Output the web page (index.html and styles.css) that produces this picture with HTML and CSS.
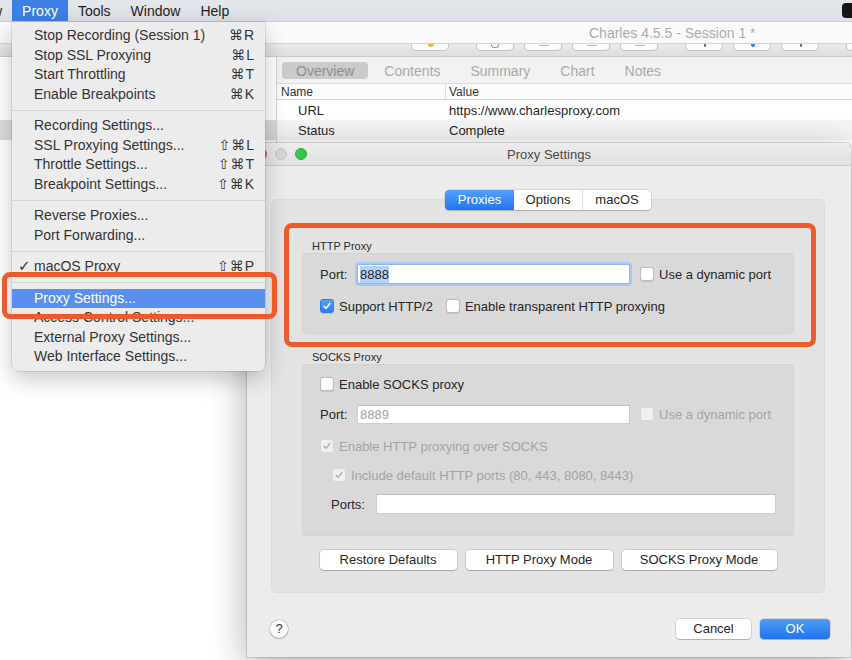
FILE: index.html
```html
<!DOCTYPE html>
<html lang="en">
<head>
  <meta charset="UTF-8">
  <title>Charles - Proxy Settings</title>
  <link rel="stylesheet" href="styles.css">
</head>
<body>
  <div class="menubar">
    <span class="mb-item mb-cut">View</span>
    <span class="mb-item mb-active">Proxy</span>
    <span class="mb-item">Tools</span>
    <span class="mb-item">Window</span>
    <span class="mb-item">Help</span>
    <span class="mb-status"></span>
  </div>

  <div class="main-window">
    <div class="titlebar">Charles 4.5.5 - Session 1 *</div>
    <div class="toolbar">
      <span class="tb-btn tb-first"><i class="tb-mark mark-yellow"></i></span>
      <span class="tb-btn tb-group"><i class="tb-mark mark-ring"></i></span>
      <span class="tb-btn"><i class="tb-mark mark-bar"></i></span>
      <span class="tb-btn"><i class="tb-mark mark-bar"></i></span>
      <span class="tb-btn"><i class="tb-mark mark-bar"></i></span>
      <span class="tb-btn tb-group"><i class="tb-mark mark-dot"></i></span>
      <span class="tb-btn"><i class="tb-mark mark-blue"></i></span>
      <span class="tb-btn"><i class="tb-mark mark-dot"></i></span>
      <span class="tb-btn tb-group"></span>
    </div>
    <div class="workspace">
      <div class="tree">
        <div class="tree-row"></div>
        <div class="tree-row tree-row-selected"></div>
        <div class="tree-row"></div>
      </div>
      <div class="detail">
        <div class="tabs">
          <span class="tab tab-on">Overview</span>
          <span class="tab">Contents</span>
          <span class="tab">Summary</span>
          <span class="tab">Chart</span>
          <span class="tab">Notes</span>
        </div>
        <div class="grid-head">
          <span class="col-name">Name</span>
          <span class="col-value">Value</span>
        </div>
        <div class="grid-row">
          <span class="col-name indent">URL</span>
          <span class="col-value">https://www.charlesproxy.com</span>
        </div>
        <div class="grid-row grid-row-alt">
          <span class="col-name indent">Status</span>
          <span class="col-value">Complete</span>
        </div>
      </div>
    </div>
  </div>

  <div class="dialog">
    <div class="dialog-titlebar">
      <div class="lights">
        <span class="light light-red"></span>
        <span class="light light-idle"></span>
        <span class="light light-green"></span>
      </div>
      <div class="dialog-title">Proxy Settings</div>
      <div class="lights-spacer"></div>
    </div>
    <div class="dialog-body">
      <div class="segmented">
        <span class="seg seg-on">Proxies</span>
        <span class="seg">Options</span>
        <span class="seg seg-last">macOS</span>
      </div>
      <div class="tab-panel">
        <div class="section-label">HTTP Proxy</div>
        <div class="section section-http">
          <div class="row row-field">
            <span class="field-label">Port:</span>
            <span class="input input-port input-focus"><span class="selected-text">8888</span></span>
            <span class="check"><span class="box"></span>Use a dynamic port</span>
          </div>
          <div class="row row-check row-http2">
            <span class="check"><span class="box box-on"><svg viewBox="0 0 14 14"><path d="M3.6 7.4l2.3 2.4 4.4-5.6" fill="none" stroke="#fff" stroke-width="1.8" stroke-linecap="round" stroke-linejoin="round"/></svg></span>Support HTTP/2</span>
            <span class="check"><span class="box"></span>Enable transparent HTTP proxying</span>
          </div>
        </div>

        <div class="section-label section-label-socks">SOCKS Proxy</div>
        <div class="section section-socks">
          <div class="row row-check">
            <span class="check"><span class="box"></span>Enable SOCKS proxy</span>
          </div>
          <div class="row row-field socks-port">
            <span class="field-label">Port:</span>
            <span class="input input-port input-socks"><span class="placeholder">8889</span></span>
            <span class="check check-disabled"><span class="box box-disabled"></span>Use a dynamic port</span>
          </div>
          <div class="row row-check socks-over">
            <span class="check check-disabled"><span class="box box-disabled"><svg viewBox="0 0 14 14"><path d="M3.6 7.4l2.3 2.4 4.4-5.6" fill="none" stroke="#a9a9a9" stroke-width="1.6" stroke-linecap="round" stroke-linejoin="round"/></svg></span>Enable HTTP proxying over SOCKS</span>
          </div>
          <div class="row row-check socks-default">
            <span class="check check-disabled"><span class="box box-disabled"><svg viewBox="0 0 14 14"><path d="M3.6 7.4l2.3 2.4 4.4-5.6" fill="none" stroke="#a9a9a9" stroke-width="1.6" stroke-linecap="round" stroke-linejoin="round"/></svg></span>Include default HTTP ports (80, 443, 8080, 8443)</span>
          </div>
          <div class="row row-field socks-ports">
            <span class="field-label field-label-ports">Ports:</span>
            <span class="input input-ports"></span>
          </div>
        </div>

        <div class="mode-buttons">
          <span class="btn btn-restore">Restore Defaults</span>
          <span class="btn btn-http">HTTP Proxy Mode</span>
          <span class="btn btn-socks">SOCKS Proxy Mode</span>
        </div>
      </div>

      <div class="dialog-footer">
        <span class="help">?</span>
        <span class="btn btn-cancel">Cancel</span>
        <span class="btn btn-ok">OK</span>
      </div>
    </div>
  </div>

  <div class="menu">
    <div class="menu-item"><span>Stop Recording (Session 1)</span><span class="key">⌘R</span></div>
    <div class="menu-item"><span>Stop SSL Proxying</span><span class="key">⌘L</span></div>
    <div class="menu-item"><span>Start Throttling</span><span class="key">⌘T</span></div>
    <div class="menu-item"><span>Enable Breakpoints</span><span class="key">⌘K</span></div>
    <div class="menu-sep"></div>
    <div class="menu-item"><span>Recording Settings...</span></div>
    <div class="menu-item"><span>SSL Proxying Settings...</span><span class="key">⇧⌘L</span></div>
    <div class="menu-item"><span>Throttle Settings...</span><span class="key">⇧⌘T</span></div>
    <div class="menu-item"><span>Breakpoint Settings...</span><span class="key">⇧⌘K</span></div>
    <div class="menu-sep"></div>
    <div class="menu-item"><span>Reverse Proxies...</span></div>
    <div class="menu-item"><span>Port Forwarding...</span></div>
    <div class="menu-sep"></div>
    <div class="menu-item"><span class="tick">✓</span><span class="grow">macOS Proxy</span><span class="key">⇧⌘P</span></div>
    <div class="menu-sep"></div>
    <div class="menu-item menu-item-on"><span>Proxy Settings...</span></div>
    <div class="menu-item"><span>Access Control Settings...</span></div>
    <div class="menu-item"><span>External Proxy Settings...</span></div>
    <div class="menu-item"><span>Web Interface Settings...</span></div>
  </div>

  <div class="callout callout-menu"></div>
  <div class="callout callout-http"></div>
</body>
</html>
```

FILE: styles.css
```css
* {
  box-sizing: border-box;
}

body {
  margin: 0;
  width: 852px;
  height: 660px;
  overflow: hidden;
  position: relative;
  background: #fff;
  color: #262626;
  font-family: "Liberation Sans", Arial, "DejaVu Sans", sans-serif;
}

/* top menu bar */
.menubar {
  display: flex;
  height: 22px;
  line-height: 22px;
  font-size: 14px;
  color: #1e1e1e;
  background: linear-gradient(#e3e6eb, #dcdfe5);
  border-bottom: 1px solid #cfd2d7;
}

.mb-item {
  padding: 0 10px;
  white-space: nowrap;
}

.mb-cut {
  margin-left: -38px;
}

.mb-active {
  background: #3d7fe6;
  color: #fff;
}

.mb-status {
  margin-left: auto;
  margin-top: 3px;
  width: 10px;
  height: 15px;
  background: #151515;
  border-radius: 4px 0 0 4px;
}

/* main charles window */
.main-window {
  height: 638px;
  background: #fff;
}

.titlebar {
  height: 22px;
  line-height: 23px;
  padding-left: 589px;
  font-size: 14px;
  color: #ababab;
  background: #fafafa;
  border-bottom: 1px solid #d6d6d6;
}

.toolbar {
  display: flex;
  height: 13px;
  overflow: hidden;
  background: linear-gradient(#eaeaea, #dedede);
  border-bottom: 1px solid #c9c9c9;
}

.tb-btn {
  position: relative;
  flex: none;
  width: 38px;
  height: 22px;
  margin-top: -15px;
  margin-left: 10px;
  background: #fcfcfc;
  border: 1px solid #c4c4c4;
  border-radius: 5px;
}

.tb-first {
  margin-left: 411px;
}

.tb-group {
  margin-left: 27px;
}

.tb-mark {
  position: absolute;
  left: 16px;
  top: 14px;
  width: 6px;
  height: 3px;
  border-radius: 0 0 3px 3px;
}

.mark-yellow { background: #e8b93a; }
.mark-ring { border: 1px solid #9a9a9a; border-top: none; height: 4px; width: 8px; left: 14px; }
.mark-bar { background: #b0b0b0; height: 1px; top: 15px; width: 10px; left: 14px; }
.mark-dot { background: #6d6d6d; width: 2px; left: 18px; }
.mark-blue { background: #2d7ff0; width: 4px; left: 17px; }

.workspace {
  display: flex;
  height: 581px;
}

.tree {
  flex: none;
  width: 277px;
  padding-top: 43px;
  border-right: 1px solid #d3d3d3;
}

.tree-row {
  height: 20px;
}

.tree-row-selected {
  background: #dcdcdc;
}

.detail {
  flex: 1;
}

.tabs {
  display: flex;
  gap: 2px;
  height: 27px;
  padding: 5px 0 0 5px;
  font-size: 14px;
  color: #a9a9a9;
  background: #f2f2f2;
  border-bottom: 1px solid #dedede;
}

.tab {
  height: 17px;
  line-height: 18px;
  padding: 0 14px;
  border-radius: 4px;
}

.tab-on {
  background: #cbcbcb;
  color: #8f8f8f;
}

.grid-head,
.grid-row {
  display: flex;
  white-space: nowrap;
}

.grid-head {
  height: 16px;
  line-height: 16px;
  font-size: 12px;
  color: #333;
  background: #fbfbfb;
  border-bottom: 1px solid #d9d9d9;
}

.grid-head .col-name {
  border-right: 1px solid #dcdcdc;
}

.grid-row {
  height: 20px;
  line-height: 21px;
  font-size: 13px;
  color: #1f1f1f;
}

.grid-row-alt {
  background: #f5f5f5;
}

.col-name {
  width: 169px;
  padding-left: 4px;
}

.col-name.indent {
  padding-left: 21px;
}

.col-value {
  padding-left: 3px;
}

/* proxy settings dialog */
.dialog {
  position: absolute;
  left: 247px;
  top: 143px;
  width: 604px;
  height: 514px;
  background: #ececec;
  border-radius: 5px 5px 0 0;
  box-shadow: 0 0 0 1px rgba(0, 0, 0, 0.12), 0 10px 38px rgba(0, 0, 0, 0.32);
}

.dialog-titlebar {
  display: flex;
  align-items: center;
  height: 23px;
  background: linear-gradient(#ececec, #e1e1e1);
  border-bottom: 1px solid #c9c9c9;
  border-radius: 5px 5px 0 0;
}

.lights,
.lights-spacer {
  display: flex;
  gap: 8px;
  width: 60px;
  padding-left: 8px;
}

.light {
  width: 12px;
  height: 12px;
  border-radius: 50%;
}

.light-red { background: #fc605c; border: 1px solid #de4b47; }
.light-idle { background: #d5d5d5; border: 1px solid #c4c4c4; }
.light-green { background: #34c84a; border: 1px solid #2aab3c; }

.dialog-title {
  flex: 1;
  text-align: center;
  font-size: 13px;
  color: #4a4a4a;
}

.dialog-body {
  padding: 24px 26px 0 24px;
  font-size: 13px;
}

.segmented {
  position: relative;
  z-index: 1;
  display: flex;
  width: 206px;
  height: 20px;
  margin: 0 auto -11px;
  background: #fff;
  border-radius: 4px;
  box-shadow: 0 0 0 0.5px rgba(0, 0, 0, 0.18), 0 1px 1px rgba(0, 0, 0, 0.15);
}

.seg {
  width: 69px;
  line-height: 20px;
  text-align: center;
  color: #262626;
  border-right: 1px solid #dadada;
}

.seg-last {
  width: 68px;
  border-right: none;
}

.seg-on {
  color: #fff;
  background: linear-gradient(#54a0f9, #1f76f0);
  border-right: none;
  border-radius: 4px 0 0 4px;
}

.tab-panel {
  padding: 40px 30px 22px;
  background: #e3e3e3;
  border-radius: 5px;
  border: 1px solid #dcdcdc;
}

.section-label {
  height: 13px;
  line-height: 13px;
  padding-left: 10px;
  font-size: 11px;
  color: #2b2b2b;
}

.section-label-socks {
  margin-top: 17px;
}

.section {
  background: #d9d9d9;
  border-radius: 4px;
  border: 1px solid #d3d3d3;
}

.section-http {
  padding: 10px 17px 19px;
}

.section-socks {
  padding: 11px 17px 21px;
}

.row {
  display: flex;
  align-items: center;
  white-space: nowrap;
}

.row-field {
  height: 20px;
}

.row-check {
  height: 16px;
}

.row-http2 {
  margin-top: 14px;
  gap: 13px;
}

.socks-port { margin-top: 12px; }
.socks-over { margin-top: 14px; }
.socks-default { margin-top: 13px; padding-left: 12px; }
.socks-ports { margin-top: 11px; padding-left: 11px; }

.field-label {
  width: 37px;
  color: #262626;
}

.field-label-ports {
  width: 45px;
}

.input {
  height: 20px;
  line-height: 20px;
  padding-left: 2px;
  background: #fff;
  border: 1px solid #cfcfcf;
  border-top-color: #bdbdbd;
}

.input-port {
  width: 273px;
  margin-right: 10px;
}

.input-socks {
  height: 19px;
  line-height: 18px;
}

.input-focus {
  border: 1px solid #8db7f1;
  box-shadow: 0 0 0 2px #a9c9f5;
  border-radius: 2px;
}

.selected-text {
  background: #b4d3fb;
  padding: 1px 0;
}

.placeholder {
  color: #a5a5a5;
}

.input-ports {
  width: 404px;
}

.check {
  display: flex;
  align-items: center;
  gap: 5px;
  color: #262626;
}

.check-disabled {
  color: #a3a3a3;
}

.box {
  display: flex;
  flex: none;
  width: 14px;
  height: 14px;
  background: #fff;
  border: 1px solid #bcbcbc;
  border-radius: 3px;
  box-shadow: 0 0.5px 1px rgba(0, 0, 0, 0.1);
}

.box svg {
  width: 12px;
  height: 12px;
}

.box-on {
  background: linear-gradient(#5aa1f9, #2a7cf1);
  border-color: #2b78e3;
}

.box-disabled {
  background: #f0f0f0;
  border-color: #d6d6d6;
  box-shadow: none;
}

.mode-buttons {
  display: flex;
  justify-content: center;
  gap: 9px;
  margin-top: 14px;
}

.btn {
  height: 20px;
  line-height: 20px;
  text-align: center;
  font-size: 13px;
  color: #262626;
  background: #fff;
  border-radius: 4px;
  box-shadow: 0 0 0 0.5px rgba(0, 0, 0, 0.2), 0 1px 1px rgba(0, 0, 0, 0.18);
}

.btn-restore { width: 137px; }
.btn-http { width: 147px; }
.btn-socks { width: 155px; }

.dialog-footer {
  display: flex;
  align-items: center;
  gap: 9px;
  margin: 26px -5px 0 -1px;
}

.help {
  width: 18px;
  height: 18px;
  line-height: 18px;
  margin-right: auto;
  text-align: center;
  font-size: 13px;
  color: #333;
  background: #fff;
  border-radius: 50%;
  box-shadow: 0 0 0 0.5px rgba(0, 0, 0, 0.25), 0 1px 2px rgba(0, 0, 0, 0.2);
}

.btn-cancel { width: 75px; }

.btn-ok {
  width: 70px;
  color: #fff;
  background: linear-gradient(#4f9cf8, #1f74ef);
}

/* proxy menu */
.menu {
  position: absolute;
  left: 12px;
  top: 22px;
  width: 253px;
  padding: 4px 0;
  background: #ececec;
  border-radius: 0 0 6px 6px;
  box-shadow: 0 0 0 0.5px rgba(0, 0, 0, 0.18), 0 8px 22px rgba(0, 0, 0, 0.22);
  font-size: 14px;
  color: #333;
}

.menu-item {
  display: flex;
  justify-content: space-between;
  height: 19.5px;
  line-height: 19.5px;
  padding: 0 10px 0 22px;
  white-space: nowrap;
}

.menu-item .grow {
  flex: 1;
}

.menu-item-on {
  background: #5990ef;
  color: #fff;
}

.tick {
  width: 16px;
  margin-left: -16px;
  font-family: "DejaVu Sans", sans-serif;
  font-size: 15px;
  font-weight: bold;
}

.key {
  font-family: "Liberation Sans", "DejaVu Sans", sans-serif;
  letter-spacing: 1px;
}

.menu-sep {
  height: 12px;
  padding-top: 5.5px;
}

.menu-sep::after {
  content: "";
  display: block;
  height: 1px;
  background: #d3d3d3;
}

/* orange annotations */
.callout {
  position: absolute;
  border: 5px solid #ee5a2a;
  border-radius: 8px;
}

.callout-menu {
  left: 2px;
  top: 272px;
  width: 275px;
  height: 47px;
}

.callout-http {
  left: 284px;
  top: 223px;
  width: 532px;
  height: 124px;
}
```
